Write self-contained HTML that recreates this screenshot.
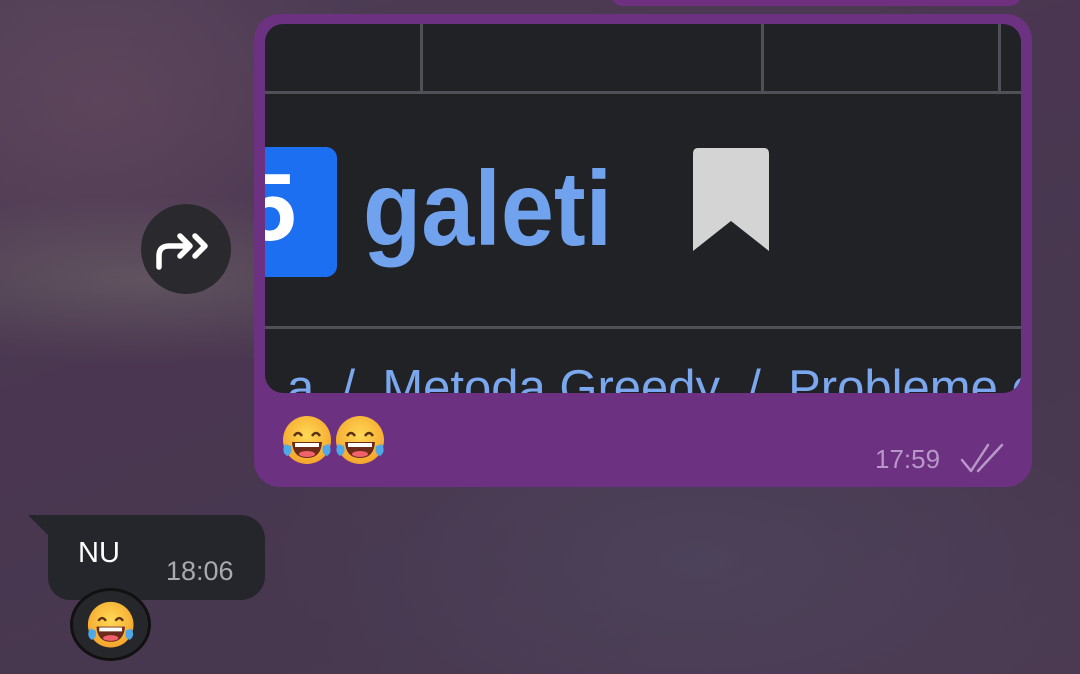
<!DOCTYPE html>
<html><head><meta charset="utf-8"><style>
*{margin:0;padding:0;box-sizing:border-box}
body{width:1080px;height:674px;overflow:hidden;position:relative;font-family:"Liberation Sans",sans-serif;
background:radial-gradient(ellipse 500px 120px at 150px 280px,rgba(120,115,110,.45),transparent 70%),
radial-gradient(ellipse 400px 300px at 100px 100px,rgba(110,80,100,.5),transparent 70%),
radial-gradient(ellipse 600px 300px at 700px 560px,rgba(80,75,100,.5),transparent 70%),
linear-gradient(160deg,#4d3d55 0%,#4a3650 40%,#47384f 70%,#4b3a52 100%)}
.abs{position:absolute}
</style></head><body>
<div class="abs" style="left:610px;top:-20px;width:412px;height:26px;background:#6f3080;border-radius:14px"></div>
<div class="abs" style="left:254px;top:14px;width:778px;height:473px;background:#6d3181;border-radius:26px"></div>
<div class="abs" style="left:265px;top:24px;width:756px;height:369px;background:#212226;border-radius:18px;overflow:hidden">
  <div class="abs" style="left:155px;top:0;width:3px;height:68px;background:#4f5156"></div>
  <div class="abs" style="left:496px;top:0;width:3px;height:68px;background:#4f5156"></div>
  <div class="abs" style="left:733px;top:0;width:3px;height:68px;background:#4f5156"></div>
  <div class="abs" style="left:0;top:67px;width:756px;height:3px;background:#4f5156"></div>
  <div class="abs" style="left:-20px;top:123px;width:92px;height:130px;background:#1b6ff0;border-radius:11px"></div>
  <div class="abs" style="left:-22px;top:134px;font-size:96px;color:#fff;font-weight:bold;line-height:100px">5</div>
  <div class="abs" style="left:98px;top:130px;font-size:106px;color:#70a2ee;line-height:110px;font-weight:bold;transform:scaleX(0.9);transform-origin:0 0">galeti</div>
  <svg class="abs" style="left:427px;top:124px" width="78" height="104"><path d="M6 0H72Q77 0 77 6V103L39 73L1 103V6Q1 0 6 0Z" fill="#d4d4d4"/></svg>
  <div class="abs" style="left:0;top:302px;width:756px;height:3px;background:#4f5156"></div>
  <div class="abs" style="left:22px;top:336px;font-size:49px;color:#7aa7ee;white-space:nowrap;line-height:56px">a&nbsp; /&nbsp; Metoda Greedy&nbsp; /&nbsp; Probleme c</div>
</div>
<svg class="abs" style="left:281px;top:414px" width="110" height="52">
 <defs><radialGradient id="f" cx=".5" cy=".4" r=".6"><stop offset="0" stop-color="#ffd956"/><stop offset="1" stop-color="#f4a52c"/></radialGradient>
 <g id="e"><circle cx="26" cy="26" r="24" fill="url(#f)"/><path d="M13 22q4-6 8 0M31 22q4-6 8 0" stroke="#5a3212" stroke-width="2.5" fill="none"/><path d="M11 28H41Q40 44 26 44Q12 44 11 28Z" fill="#6b2a1a"/><path d="M14 29H38V33H14Z" fill="#fff"/><ellipse cx="26" cy="40" rx="8" ry="3" fill="#f0626b"/><path d="M4 30q-4 8 2 12q6-2 4-10z M48 30q4 8-2 12q-6-2-4-10z" fill="#4fa8e8"/></g></defs>
 <use href="#e"/><use href="#e" x="53"/>
</svg>
<div class="abs" style="left:875px;top:444px;font-size:26px;color:#b898c8">17:59</div>
<svg class="abs" style="left:958px;top:440px" width="50" height="36"><path d="M4 20l9 11L30 5M20 31L44 5" stroke="#b898c8" stroke-width="2.5" fill="none" stroke-linecap="round" stroke-linejoin="round"/></svg>
<div class="abs" style="left:141px;top:204px;width:90px;height:90px;border-radius:50%;background:#2a2a2e"></div>
<svg class="abs" style="left:141px;top:204px" width="90" height="90"><path d="M18 63V52Q18 42 28 42H48M39 32l10 10-10 10M54 32l10 10-10 10" stroke="#fff" stroke-width="5.5" fill="none" stroke-linecap="round" stroke-linejoin="round"/></svg>
<svg class="abs" style="left:28px;top:515px" width="40" height="30"><path d="M0 0H30V30Z" fill="#25262b"/></svg>
<div class="abs" style="left:48px;top:515px;width:217px;height:85px;background:#25262b;border-radius:22px 24px 24px 22px;border-top-left-radius:4px"></div>
<div class="abs" style="left:78px;top:537px;font-size:29px;color:#fff">NU</div>
<div class="abs" style="left:166px;top:556px;font-size:27px;color:#a8aaaf">18:06</div>
<div class="abs" style="left:70px;top:588px;width:81px;height:73px;border-radius:50%;background:#26272b;border:3px solid #111"></div>
<svg class="abs" style="left:86px;top:600px" width="52" height="52"><use href="#e" transform="scale(0.95)"/></svg>
</body></html>
